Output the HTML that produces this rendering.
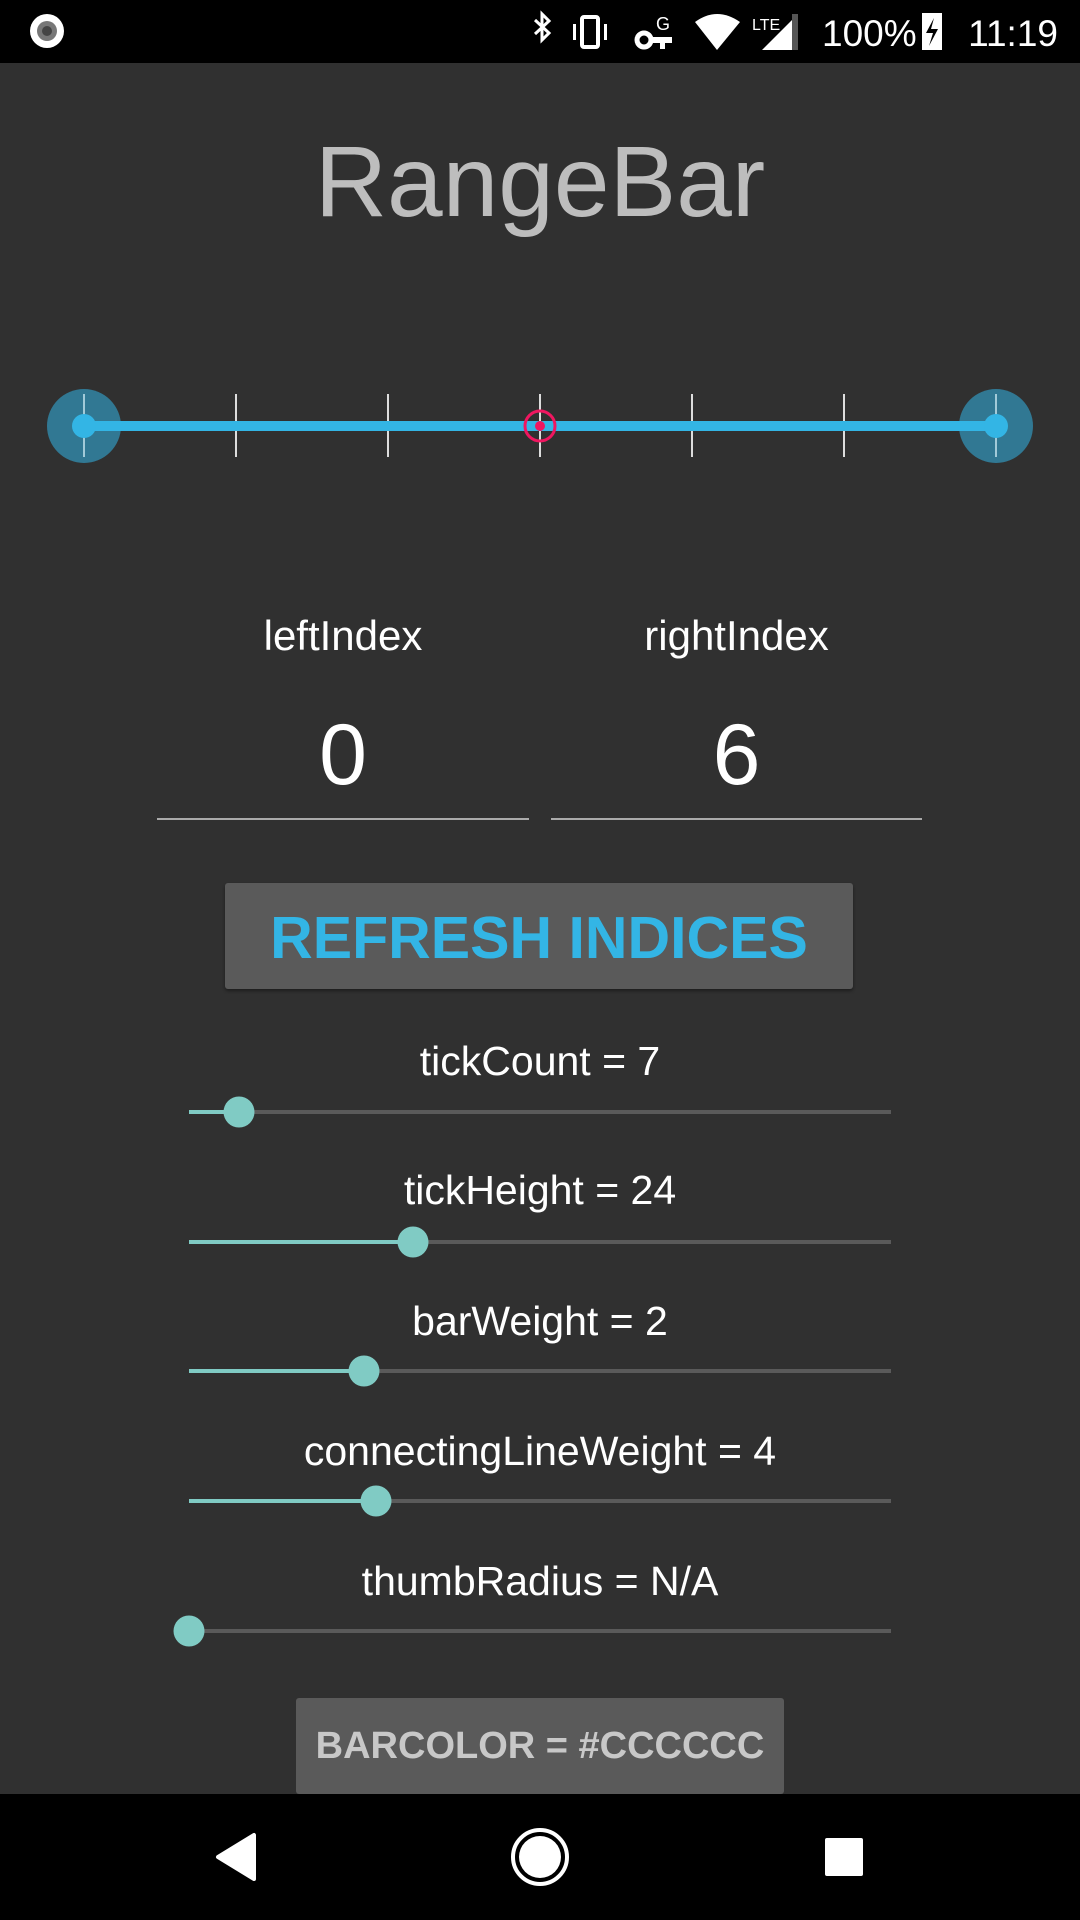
<!DOCTYPE html>
<html><head><meta charset="utf-8"><style>
*{margin:0;padding:0;box-sizing:border-box}
body{width:1080px;height:1920px;background:#303030;position:relative;overflow:hidden;font-family:"Liberation Sans",sans-serif;color:#fff}
.abs{position:absolute}
.t{position:absolute;left:0;width:1080px;text-align:center}
</style></head><body>
<div class="abs" style="left:0;top:0;width:1080px;height:63px;background:#000"></div>
<svg class="abs" style="left:0;top:0" width="1080" height="63">
<circle cx="47" cy="31" r="17" fill="#fff"/><circle cx="47" cy="31" r="10" fill="#777"/><circle cx="47" cy="31" r="5" fill="#444"/>
<path d="M535 20 L549 33 L542 40 L542 14 L549 21 L535 34" stroke="#fff" stroke-width="3" fill="none"/>
<rect x="582" y="17" width="16" height="30" rx="2" stroke="#fff" stroke-width="4" fill="none"/>
<rect x="573" y="24" width="3" height="16" fill="#fff"/><rect x="604" y="24" width="3" height="16" fill="#fff"/>
<circle cx="644" cy="40" r="7" stroke="#fff" stroke-width="5" fill="none"/><rect x="650" y="37" width="22" height="6" fill="#fff"/><rect x="660" y="40" width="5" height="9" fill="#fff"/>
<text x="656" y="30" font-size="18" fill="#fff" font-family="Liberation Sans">G</text>
<path d="M695 22 Q717 6 740 22 L717 50 Z" fill="#fff"/>
<text x="752" y="30" font-size="16" fill="#fff" font-family="Liberation Sans">LTE</text>
<path d="M762 50 L798 14 L798 50 Z" fill="#fff"/><rect x="792" y="14" width="6" height="36" fill="#555"/>
<text x="822" y="46" font-size="37" fill="#fff" font-family="Liberation Sans">100%</text>
<rect x="922" y="13" width="20" height="37" fill="#fff"/><path d="M934 18 L926 33 L933 33 L929 46 L938 29 L931 29 Z" fill="#000"/>
<text x="1058" y="46" font-size="37" fill="#fff" text-anchor="end" font-family="Liberation Sans">11:19</text>
</svg>
<div class="t" style="top:122px;font-size:100px;line-height:120px;color:#bdbdbd">RangeBar</div>
<svg class="abs" style="left:0;top:380px" width="1080" height="100">
<g stroke="#ddd" stroke-width="2">
<line x1="84" y1="14" x2="84" y2="77"/><line x1="236" y1="14" x2="236" y2="77"/><line x1="388" y1="14" x2="388" y2="77"/><line x1="540" y1="14" x2="540" y2="77"/><line x1="692" y1="14" x2="692" y2="77"/><line x1="844" y1="14" x2="844" y2="77"/><line x1="996" y1="14" x2="996" y2="77"/>
</g>
<circle cx="84" cy="46" r="37" fill="#33b5e5" opacity="0.55"/><circle cx="996" cy="46" r="37" fill="#33b5e5" opacity="0.55"/>
<line x1="84" y1="46" x2="996" y2="46" stroke="#33b5e5" stroke-width="10"/>
<line x1="84" y1="14" x2="84" y2="77" stroke="#ccc" stroke-width="1.5" opacity="0.6"/><line x1="996" y1="14" x2="996" y2="77" stroke="#ccc" stroke-width="1.5" opacity="0.6"/>
<circle cx="84" cy="46" r="12" fill="#33b5e5"/><circle cx="996" cy="46" r="12" fill="#33b5e5"/>
<circle cx="540" cy="46" r="15" fill="none" stroke="#f01660" stroke-width="3"/><circle cx="540" cy="46" r="5" fill="#f01660"/>
</svg>
<div class="abs" style="left:157px;top:612px;width:372px;text-align:center;font-size:42px">leftIndex</div>
<div class="abs" style="left:551px;top:612px;width:371px;text-align:center;font-size:42px">rightIndex</div>
<div class="abs" style="left:157px;top:705px;width:372px;text-align:center;font-size:86px;line-height:100px">0</div>
<div class="abs" style="left:551px;top:705px;width:371px;text-align:center;font-size:86px;line-height:100px">6</div>
<div class="abs" style="left:157px;top:818px;width:372px;height:2px;background:#aaa"></div>
<div class="abs" style="left:551px;top:818px;width:371px;height:2px;background:#aaa"></div>
<div class="abs" style="left:225px;top:883px;width:628px;height:106px;background:#5a5a5a;border-radius:3px;box-shadow:0 2px 3px rgba(0,0,0,.4);color:#33b5e5;font-weight:bold;font-size:59px;line-height:110px;text-align:center">REFRESH INDICES</div>
<div class="t" style="top:1038px;font-size:41px;line-height:46px">tickCount = 7</div>
<div class="t" style="top:1167px;font-size:41px;line-height:46px">tickHeight = 24</div>
<div class="t" style="top:1298px;font-size:41px;line-height:46px">barWeight = 2</div>
<div class="t" style="top:1428px;font-size:41px;line-height:46px">connectingLineWeight = 4</div>
<div class="t" style="top:1558px;font-size:41px;line-height:46px">thumbRadius = N/A</div>
<svg class="abs" style="left:0;top:0" width="1080" height="1920">
<g stroke-width="4">
<line x1="189" y1="1112" x2="891" y2="1112" stroke="#5a5a5a"/><line x1="189" y1="1112" x2="239" y2="1112" stroke="#80cbc4"/>
<line x1="189" y1="1242" x2="891" y2="1242" stroke="#5a5a5a"/><line x1="189" y1="1242" x2="413" y2="1242" stroke="#80cbc4"/>
<line x1="189" y1="1371" x2="891" y2="1371" stroke="#5a5a5a"/><line x1="189" y1="1371" x2="364" y2="1371" stroke="#80cbc4"/>
<line x1="189" y1="1501" x2="891" y2="1501" stroke="#5a5a5a"/><line x1="189" y1="1501" x2="376" y2="1501" stroke="#80cbc4"/>
<line x1="189" y1="1631" x2="891" y2="1631" stroke="#5a5a5a"/>
</g>
<g fill="#80cbc4"><circle cx="239" cy="1112" r="15.5"/><circle cx="413" cy="1242" r="15.5"/><circle cx="364" cy="1371" r="15.5"/><circle cx="376" cy="1501" r="15.5"/><circle cx="189" cy="1631" r="15.5"/></g>
</svg>
<div class="abs" style="left:296px;top:1698px;width:488px;height:96px;background:#5a5a5a;border-radius:3px;color:#c8c8c8;font-weight:bold;font-size:38px;line-height:96px;text-align:center">BARCOLOR = #CCCCCC</div>
<div class="abs" style="left:0;top:1794px;width:1080px;height:126px;background:#000"></div>
<svg class="abs" style="left:0;top:1794px" width="1080" height="126">
<path d="M218 63 L254 41 L254 85 Z" fill="#fff" stroke="#fff" stroke-width="4" stroke-linejoin="round"/>
<circle cx="540" cy="63" r="27" fill="none" stroke="#fff" stroke-width="4"/><circle cx="540" cy="63" r="21" fill="#fff"/>
<rect x="825" y="44" width="38" height="38" rx="2" fill="#fff"/>
</svg>
</body></html>
